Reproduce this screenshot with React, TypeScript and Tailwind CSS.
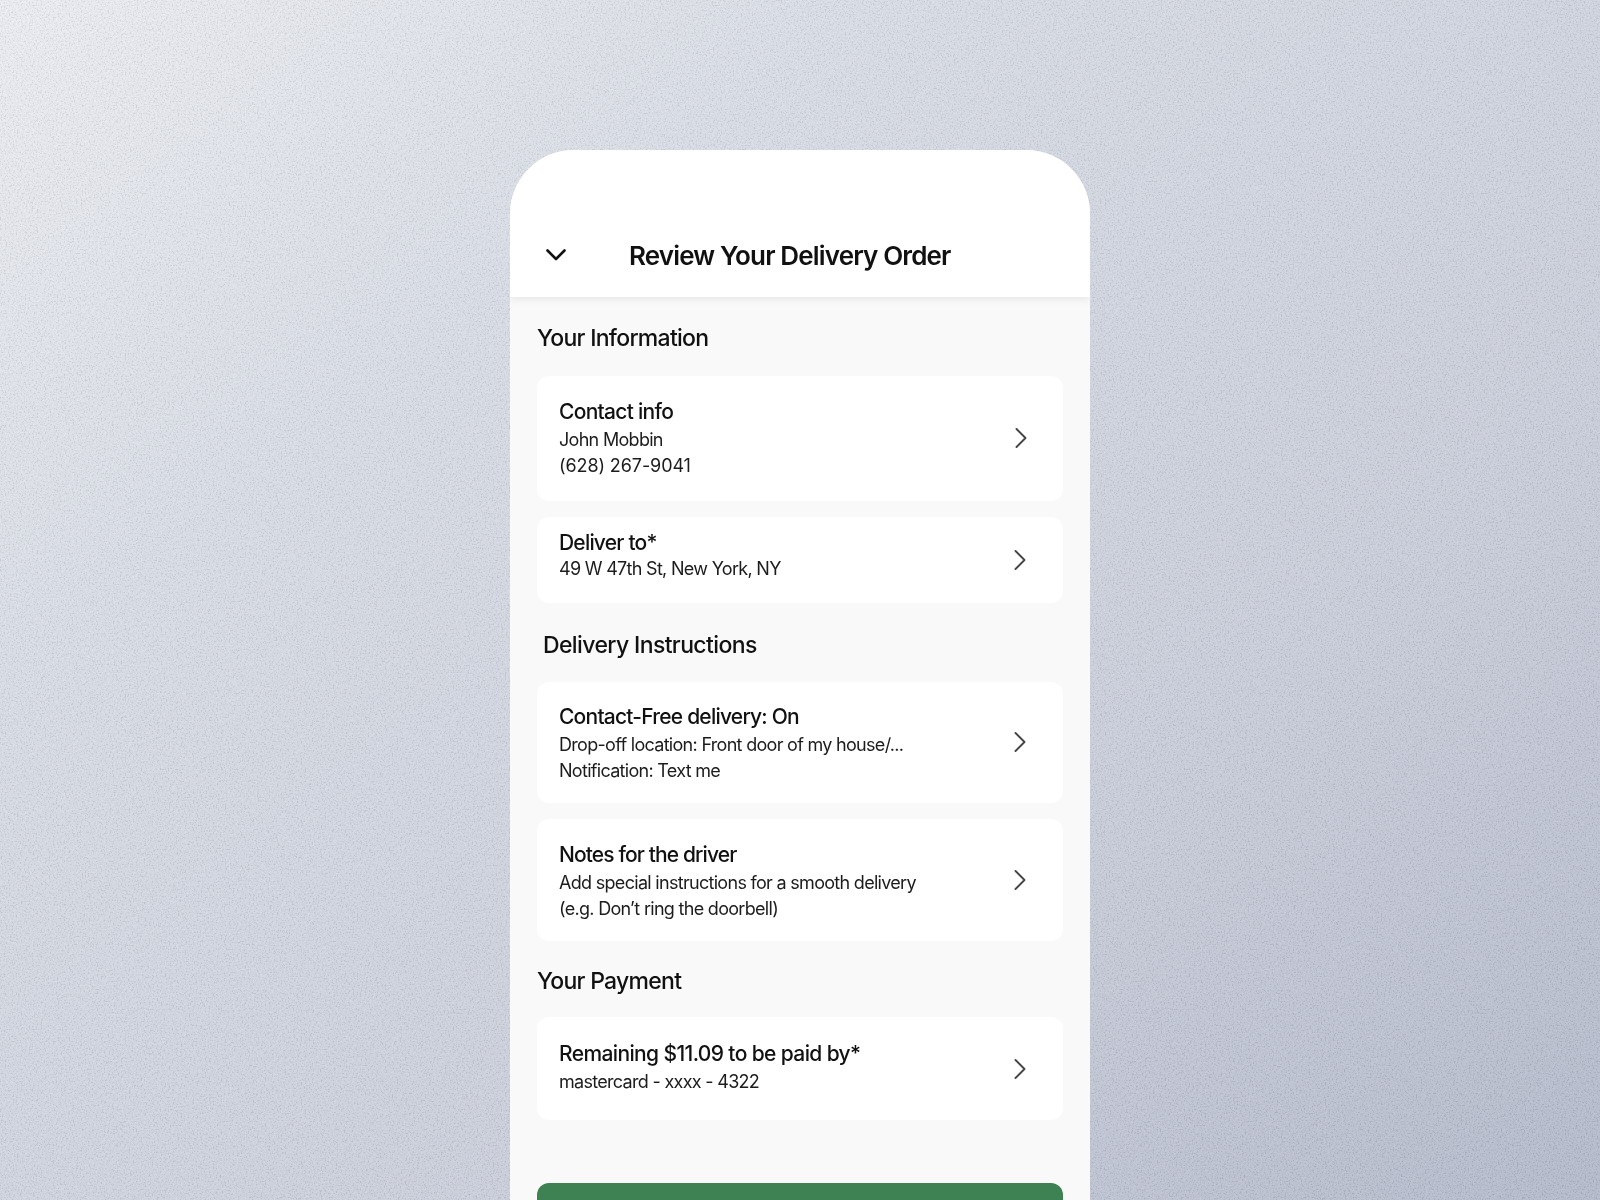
import React from "react";

function Chev({ className }: { className?: string }) {
  return (
    <svg width="16" height="24" viewBox="0 0 16 24" fill="none" className={className}>
      <path d="M3.5 3l9 9-9 9" stroke="#454545" strokeWidth="1.9" strokeLinecap="round" strokeLinejoin="round" />
    </svg>
  );
}

function Card({
  title,
  lines,
  cls,
  textCls = "",
  titleCls = "tracking-[-0.8px]",
  lastLineCls = "",
  chevCls = "",
}: {
  title: string;
  lines: string[];
  cls: string;
  textCls?: string;
  titleCls?: string;
  lastLineCls?: string;
  chevCls?: string;
}) {
  return (
    <div className={"flex items-center justify-between bg-white rounded-xl pl-[22px] " + cls}>
      <div className={textCls}>
        <div className={"text-[21px] leading-[26px] font-medium text-[#111] " + titleCls}>{title}</div>
        {lines.map((l, i) => (
          <div key={l} className={"text-[18px] leading-[26px] text-[#1c1c1c] " + (i === lines.length - 1 && lastLineCls ? lastLineCls : "tracking-[-0.7px]")}>
            {l}
          </div>
        ))}
      </div>
      <Chev className={chevCls} />
    </div>
  );
}

export default function App() {
  const heading = "text-[23px] leading-[30px] font-medium text-[#111]";
  return (
    <div className="relative h-[1200px] w-full overflow-hidden bg-[linear-gradient(to_bottom_right,#eef0f5_0%,#dbdfe8_28%,#cdd1de_65%,#b5bbcd_100%)] font-['Inter','Liberation_Sans',sans-serif]">
      <svg className="absolute inset-0 opacity-[0.1]" width="1600" height="1200">
        <filter id="n" x="0" y="0" width="100%" height="100%">
          <feTurbulence type="fractalNoise" baseFrequency="0.75" numOctaves="3" seed="3" />
          <feColorMatrix type="matrix" values="2.4 0 0 0 -0.7  2.4 0 0 0 -0.7  2.4 0 0 0 -0.7  0 0 0 0 1" />
        </filter>
        <rect width="1600" height="1200" filter="url(#n)" />
      </svg>
      <div className="relative mx-auto mt-[150px] w-[580px] h-[1050px] bg-[#f9f9f9] rounded-t-[64px] overflow-hidden blur-[0.35px]">
        <div className="h-[147px] bg-white shadow-[0_2px_8px_rgba(0,0,0,0.08)] flex items-end pb-[24px] pl-[36px]">
          <svg width="20" height="14" viewBox="0 0 20 14" fill="none" className="mb-[11px]">
            <path d="M1.5 2.5l8.5 8.5 8.5-8.5" stroke="#111" strokeWidth="2.6" strokeLinecap="round" strokeLinejoin="round" />
          </svg>
          <div className="ml-[63px] text-[26px] leading-[34px] font-semibold text-[#111] tracking-[-0.85px]">Review Your Delivery Order</div>
        </div>
        <div className="px-[27px]">
          <div className={"mt-[26px] tracking-[-0.72px] " + heading}>Your Information</div>
          <Card cls="mt-[23px] h-[125px] pr-[34px]" textCls="pt-[1px]" titleCls="tracking-[-0.72px] mb-[2px]" lastLineCls="tracking-[-0.1px]" chevCls="-mt-[2px]" title="Contact info" lines={["John Mobbin", "(628) 267-9041"]} />
          <Card cls="mt-[16px] h-[86px] pr-[35px]" textCls="pb-[8px]" title="Deliver to*" lines={["49 W 47th St, New York, NY"]} />
          <div className={"mt-[27px] ml-[6px] tracking-[-0.62px] " + heading}>Delivery Instructions</div>
          <Card cls="mt-[22px] h-[121px] pr-[35px]" textCls="pt-[3px]" titleCls="tracking-[-0.78px] mb-[2px]" chevCls="-mt-[1px]" title="Contact-Free delivery: On" lines={["Drop-off location: Front door of my house/...", "Notification: Text me"]} />
          <Card cls="mt-[16px] h-[122px] pr-[35px]" textCls="pt-[4px]" titleCls="tracking-[-0.88px] mb-[2px]" title="Notes for the driver" lines={["Add special instructions for a smooth delivery", "(e.g. Don’t ring the doorbell)"]} />
          <div className={"mt-[25px] tracking-[-0.72px] " + heading}>Your Payment</div>
          <Card cls="mt-[21px] h-[103px] pr-[35px]" textCls="pb-[1px]" titleCls="tracking-[-0.62px] mb-[2px]" title="Remaining $11.09 to be paid by*" lines={["mastercard - xxxx - 4322"]} />
          <div className="mt-[63px] h-[60px] bg-[#3e8153] rounded-xl" />
        </div>
      </div>
    </div>
  );
}
